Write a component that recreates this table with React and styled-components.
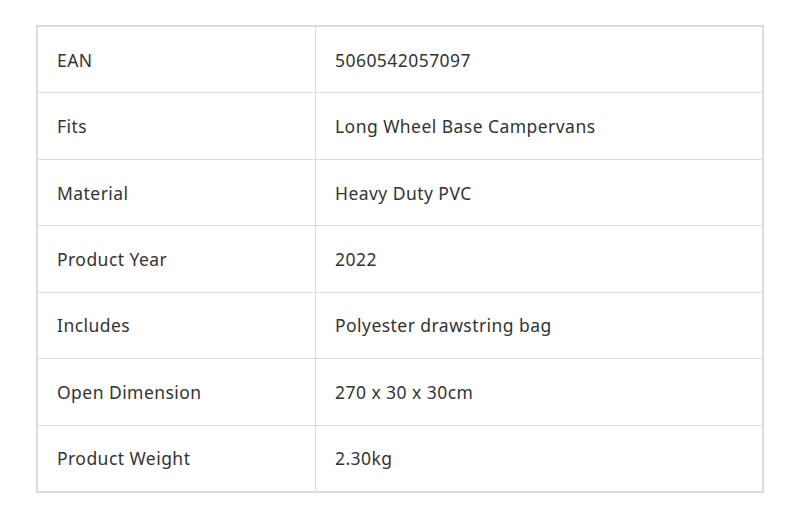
import styled, { createGlobalStyle } from "styled-components";

const GlobalStyle = createGlobalStyle`
  body {
    margin: 0;
    background: #ffffff;
    font-family: "Noto Sans", "Open Sans", sans-serif;
  }
`;

const specs = [
  ["EAN", "5060542057097"],
  ["Fits", "Long Wheel Base Campervans"],
  ["Material", "Heavy Duty PVC"],
  ["Product Year", "2022"],
  ["Includes", "Polyester drawstring bag"],
  ["Open Dimension", "270 x 30 x 30cm"],
  ["Product Weight", "2.30kg"],
];

const Page = styled.div`
  padding: 25px 36px 0 36px;
`;

const SpecTable = styled.table`
  width: 728px;
  border-collapse: collapse;
  border: 2px solid #dcdcdc;
`;

const Cell = styled.td`
  height: 65.45px;
  padding: 0 0 0 19px;
  width: ${(p) => (p.$value ? "auto" : "258px")};
  border: 1.5px solid #dcdcdc;
  color: #333333;
  font-size: 17.5px;
  line-height: 24px;
  letter-spacing: 0.45px;
  vertical-align: middle;
`;

export default function App() {
  return (
    <>
      <GlobalStyle />
      <Page>
        <SpecTable>
          <tbody>
            {specs.map(([label, value]) => (
              <tr key={label}>
                <Cell>{label}</Cell>
                <Cell $value>{value}</Cell>
              </tr>
            ))}
          </tbody>
        </SpecTable>
      </Page>
    </>
  );
}
